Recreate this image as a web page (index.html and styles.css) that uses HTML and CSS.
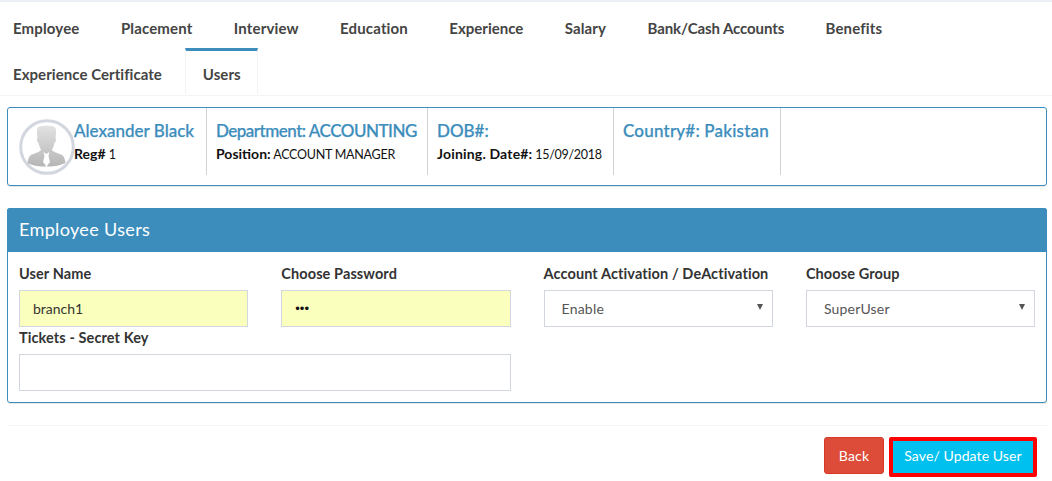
FILE: index.html
```html
<!DOCTYPE html>
<html lang="en">
<head>
<meta charset="utf-8">
<title>Employee Users</title>
<link rel="stylesheet" href="styles.css">
</head>
<body>
<ul class="tabs">
  <li class="tab"><a>Employee</a></li>
  <li class="tab"><a>Placement</a></li>
  <li class="tab"><a>Interview</a></li>
  <li class="tab"><a>Education</a></li>
  <li class="tab tab-tight"><a>Experience</a></li>
  <li class="tab"><a>Salary</a></li>
  <li class="tab tab-bank"><a>Bank/Cash Accounts</a></li>
  <li class="tab"><a>Benefits</a></li>
  <li class="tab-break" aria-hidden="true"></li>
  <li class="tab tab-cert"><a>Experience Certificate</a></li>
  <li class="tab active"><a>Users</a></li>
</ul>
<section class="summary">
  <div class="cell cell-person">
    <svg class="avatar" viewBox="0 0 56 56" width="56" height="56" aria-hidden="true">
      <defs>
        <linearGradient id="sil" x1="0" y1="0" x2="0" y2="1">
          <stop offset="0" stop-color="#e2e2e2"/>
          <stop offset="1" stop-color="#b6b6b6"/>
        </linearGradient>
      </defs>
      <circle cx="28" cy="28" r="26.300" fill="#fff" stroke="#d2d6de" stroke-width="3"/>
      <path fill="url(#sil)" d="M18.500 9 C20 6.500 23 7.500 27.500 6.500 C32 7.500 35 6.500 36.500 9 C37.500 12 37 16 36.500 19 C37.500 20 37 23 35.500 24 C35 27 33.500 29 33 31 C34 33 39 34 43 36 C45 37 46 40 46.500 44 C40 47 34 47.500 27.500 47.500 C21 47.500 14 47 8.500 44 C9 40 10 37 12 36 C16 34 21 33 22 31 C21.500 29 20 27 19.500 24 C18 23 17.500 20 18.500 19 C18 16 17.500 12 18.500 9 Z"/>
      <path fill="#fff" d="M24.500 33 L27.500 35 L30.500 33 L29.500 37 L31 43 L28 47 V49 H27 V47 L24 43 L25.500 37 Z"/>
    </svg>
    <div class="person-text">
      <h4 class="title">Alexander Black</h4>
      <p class="meta"><b>Reg#</b> 1</p>
    </div>
  </div>
  <div class="cell cell-dept">
    <h4 class="title">Department: ACCOUNTING</h4>
    <p class="meta"><b>Position:</b> ACCOUNT MANAGER</p>
  </div>
  <div class="cell cell-dob">
    <h4 class="title">DOB#:</h4>
    <p class="meta"><b>Joining. Date#:</b> 15/09/2018</p>
  </div>
  <div class="cell cell-country">
    <h4 class="title">Country#: Pakistan</h4>
  </div>
</section>
<section class="panel">
  <h3 class="panel-head">Employee Users</h3>
  <div class="form-grid">
    <div class="field">
      <label class="label" for="u">User Name</label>
      <input class="control filled" id="u" value="branch1">
    </div>
    <div class="field">
      <label class="label" for="p">Choose Password</label>
      <input class="control filled secret" id="p" type="password" value="abc">
    </div>
    <div class="field">
      <label class="label">Account Activation / DeActivation</label>
      <div class="select control"><span>Enable</span><i class="caret"></i></div>
    </div>
    <div class="field">
      <label class="label">Choose Group</label>
      <div class="select control"><span>SuperUser</span><i class="caret"></i></div>
    </div>
    <div class="field field-wide">
      <label class="label" for="k">Tickets - Secret Key</label>
      <input class="control" id="k">
    </div>
  </div>
</section>
<footer class="actions">
  <button class="btn btn-back">Back</button>
  <button class="btn btn-save">Save/ Update User</button>
</footer>
</body>
</html>
```
FILE: styles.css
```css
* { box-sizing: border-box; }
html, body { margin: 0; padding: 0; }
body {
  width: 1052px;
  height: 481px;
  overflow: hidden;
  background: #fff;
  border-top: 2px solid #ecf0f5;
  font-family: "Lato", "Noto Sans", sans-serif;
  font-size: 14px;
  color: #333;
}
.tabs {
  display: flex;
  flex-wrap: wrap;
  align-content: flex-start;
  list-style: none;
  margin: 0;
  padding: 0;
  height: 94px;
  border-bottom: 1px solid #f4f4f4;
  width: 1052px;
}
.tab { height: 46px; margin-right: 1px; }
.tab-break { flex-basis: 100%; height: 0; }
.tab a {
  display: block;
  padding: 16px 20.200px 0;
  font-weight: 700;
  font-size: 15px;
  letter-spacing: .15px;
  line-height: 21px;
  color: #444;
  white-space: nowrap;
}
.tab:first-child a { padding-left: 13px; }
.tab-tight a { letter-spacing: 0; }
.tab-bank a { letter-spacing: -.1px; }
.tab-cert a { padding-left: 13px; padding-right: 22.400px; letter-spacing: .05px; }
.tab.active {
  border-top: 3px solid #3c8dbc;
  border-left: 1px solid #f4f4f4;
  border-right: 1px solid #f4f4f4;
  background: #fff;
  height: 46px;
}
.tab.active a { padding: 13px 16.500px 0; letter-spacing: .05px; }
.summary {
  display: flex;
  margin: 11px 5px 0 7px;
  height: 79px;
  border: 1px solid #3c8dbc;
  border-radius: 3px;
  box-shadow: 0 1px 1px rgba(0,0,0,.1);
}
.cell {
  height: 67px;
  border-right: 1px solid #d2d2d2;
  padding: 13px 10px 0 9px;
}
.cell-person { display: flex; width: 199px; padding: 10px 0 0 11px; }
.cell-dept { width: 221px; }
.cell-dob { width: 186px; }
.cell-country { width: 167px; }
.avatar { flex: none; margin: 1px -1px 0 0; }
.person-text { padding-top: 3px; }
.title {
  margin: 0;
  font-size: 17px;
  line-height: 20px;
  font-weight: 500;
  color: #3c8dbc;
  -webkit-text-stroke: .25px #3c8dbc;
  white-space: nowrap;
}
.cell-dept .title { letter-spacing: -.5px; }
.cell-country .title { letter-spacing: .2px; }
.meta {
  margin: 4px 0 0;
  font-size: 12.500px;
  line-height: 18px;
  color: #111;
  white-space: nowrap;
}
.meta b { font-size: 14px; letter-spacing: 0; }
.cell-dob .meta { letter-spacing: -.3px; }
.cell-dob .meta b { letter-spacing: .18px; }
.cell-dept .meta { letter-spacing: -.25px; }
.panel {
  margin: 22px 5px 0 7px;
  height: 195px;
  border: 1px solid #3c8dbc;
  border-radius: 3px;
  box-shadow: 0 1px 1px rgba(0,0,0,.1);
}
.panel-head {
  margin: -1px -1px 0;
  height: 44px;
  padding: 10px 12px;
  background: #3c8dbc;
  color: #fff;
  font-size: 18px;
  letter-spacing: .35px;
  line-height: 22px;
  font-weight: 400;
  border-radius: 3px 3px 0 0;
}
.form-grid {
  display: grid;
  grid-template-columns: repeat(4, 229.300px);
  column-gap: 33px;
  padding: 12px 0 0 11px;
}
.field-wide { grid-column: span 2; }
.label {
  display: block;
  font-weight: 700;
  font-size: 14.500px;
  letter-spacing: .1px;
  line-height: 20px;
  margin-bottom: 6px;
  color: #333;
  white-space: nowrap;
}
.field-wide .label { margin-top: 1px; }
.control {
  display: block;
  width: 100%;
  height: 37px;
  border: 1px solid #d2d6de;
  background: #fff;
  padding: 0 13px;
  font: inherit;
  color: #333;
  outline: 0;
  border-radius: 0;
}
.filled { background: #fbffbd; }
.secret { font-family: "Liberation Sans", sans-serif; font-size: 13px; color: #111; }
.select {
  display: flex;
  align-items: center;
  justify-content: space-between;
  padding: 0 9px 0 17px;
  color: #555;
  letter-spacing: .2px;
}
.caret {
  width: 0;
  height: 0;
  margin-bottom: 4px;
  border-left: 3.500px solid transparent;
  border-right: 3.500px solid transparent;
  border-top: 6px solid #555;
}
.actions {
  display: flex;
  justify-content: flex-end;
  align-items: flex-start;
  gap: 5px;
  margin: 22px 5px 0 7px;
  padding: 11px 10px 0 0;
  border-top: 1px solid #f4f4f4;
}
.btn {
  font: inherit;
  color: #fff;
  border-radius: 3px;
  cursor: pointer;
}
.btn-back {
  width: 60px;
  height: 37px;
  background: #dd4b39;
  border: 1px solid #d73925;
  letter-spacing: .2px;
}
.btn-save {
  width: 148px;
  height: 40px;
  padding: 0 0 3px;
  background: #00c0ef;
  border: 4px solid #f00;
  border-radius: 2px;
  letter-spacing: .1px;
}
```
